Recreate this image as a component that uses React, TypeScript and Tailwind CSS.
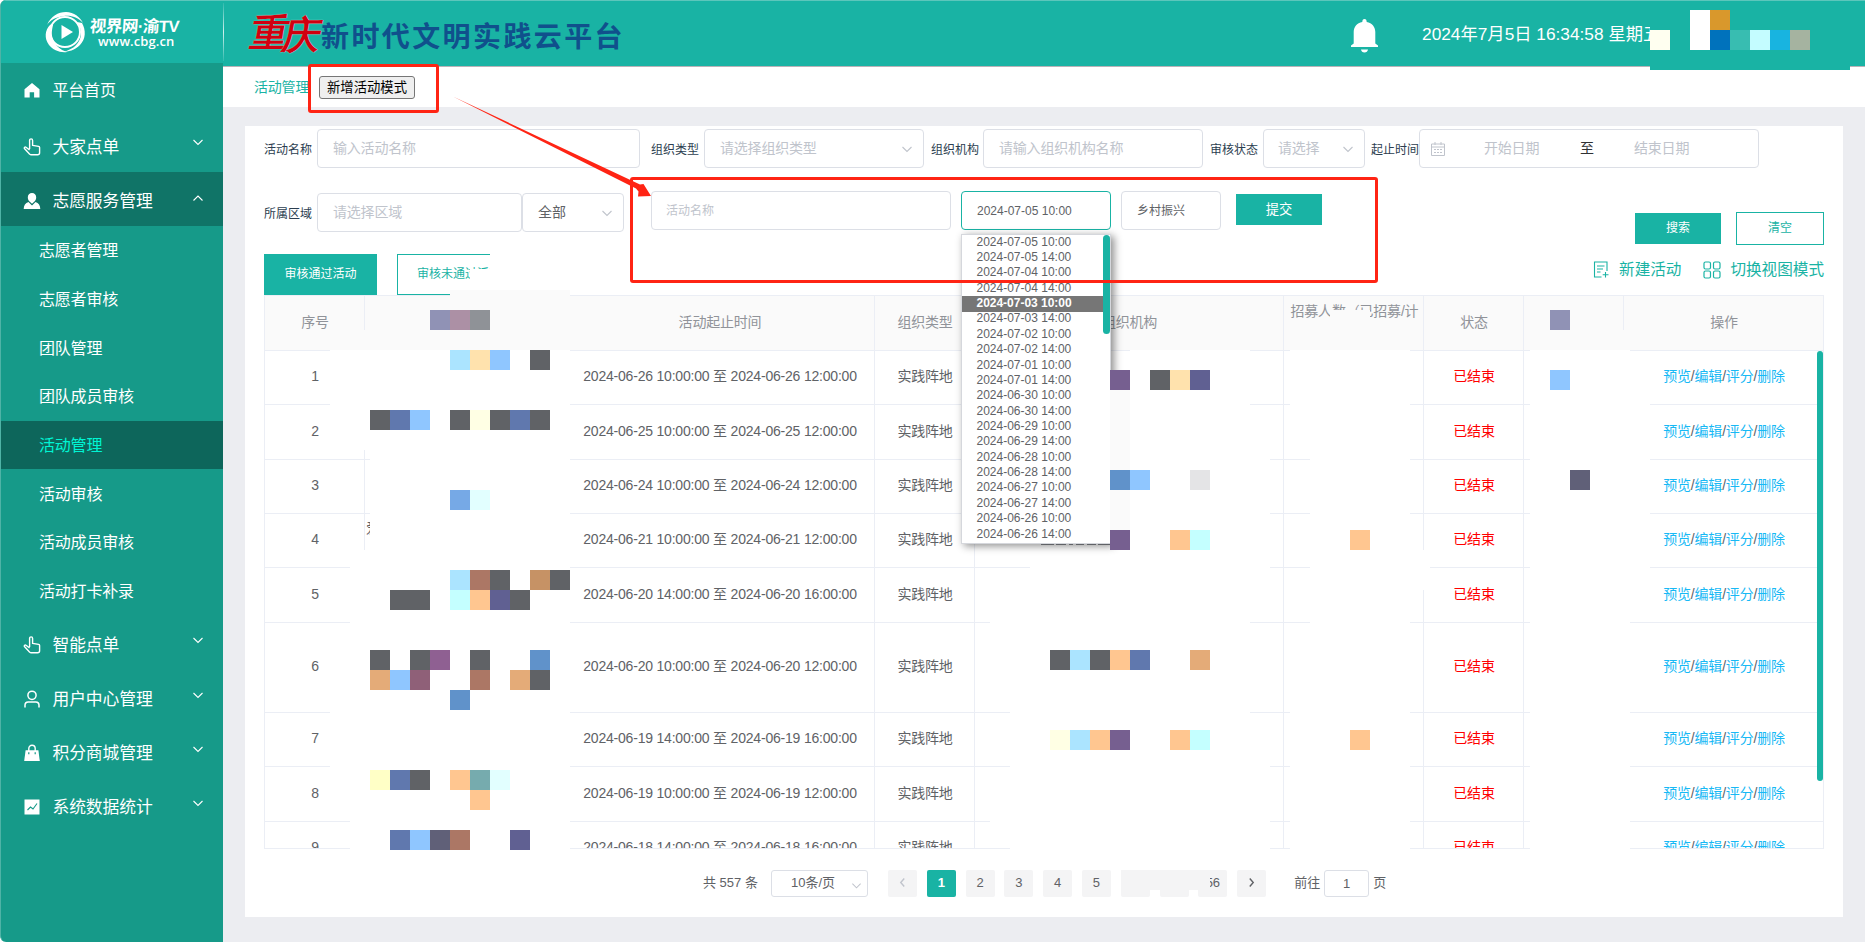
import React from "react";

const LINE = "border-[#ebeef5]";

const rows = [
  { n: 1, time: "2024-06-26 10:00:00 至 2024-06-26 12:00:00", h: 54 },
  { n: 2, time: "2024-06-25 10:00:00 至 2024-06-25 12:00:00", h: 55 },
  { n: 3, time: "2024-06-24 10:00:00 至 2024-06-24 12:00:00", h: 54 },
  { n: 4, time: "2024-06-21 10:00:00 至 2024-06-21 12:00:00", h: 54 },
  { n: 5, time: "2024-06-20 14:00:00 至 2024-06-20 16:00:00", h: 55 },
  { n: 6, time: "2024-06-20 10:00:00 至 2024-06-20 12:00:00", h: 90 },
  { n: 7, time: "2024-06-19 14:00:00 至 2024-06-19 16:00:00", h: 54 },
  { n: 8, time: "2024-06-19 10:00:00 至 2024-06-19 12:00:00", h: 55 },
  { n: 9, time: "2024-06-18 14:00:00 至 2024-06-18 16:00:00", h: 54 },
];

const slots = [
  "2024-07-05 10:00", "2024-07-05 14:00", "2024-07-04 10:00", "2024-07-04 14:00",
  "2024-07-03 10:00", "2024-07-03 14:00", "2024-07-02 10:00", "2024-07-02 14:00",
  "2024-07-01 10:00", "2024-07-01 14:00", "2024-06-30 10:00", "2024-06-30 14:00",
  "2024-06-29 10:00", "2024-06-29 14:00", "2024-06-28 10:00", "2024-06-28 14:00",
  "2024-06-27 10:00", "2024-06-27 14:00", "2024-06-26 10:00", "2024-06-26 14:00",
];

type Patch = [number, number, number, number, string];

const W = "#ffffff";
const G = "#fafafa";
const D = "#606266";

// Blank areas of the redaction layer: x, y, width, height, colour.
const patches: Patch[] = [
  [470, 269, 20, 21, W], [490, 250, 80, 45, W], [450, 290, 120, 20, G], [350, 330, 220, 20, G], [550, 300, 20, 40, G],
  [330, 350, 240, 100, W], [370, 450, 200, 100, W], [350, 550, 220, 150, W], [330, 700, 240, 110, W], [350, 810, 220, 41, W],
  [1130, 350, 120, 60, W], [1130, 410, 140, 190, W], [1110, 600, 140, 120, W], [1110, 720, 160, 130, W],
  [1030, 550, 240, 60, W], [990, 610, 260, 90, W], [1010, 700, 240, 110, W], [990, 810, 280, 20, W], [1010, 830, 260, 20, W],
  [1330, 310, 40, 40, G],
  [1290, 350, 120, 100, W], [1310, 450, 100, 100, W], [1310, 550, 120, 40, W], [1310, 590, 100, 110, W], [1290, 700, 120, 150, W],
  [1530, 330, 100, 20, G], [1530, 350, 100, 40, W], [1530, 390, 120, 220, W], [1530, 610, 100, 240, W],
  [1650, 10, 200, 60, "#19b3a4"],
];

// Areas that also cover the open dropdown's shadow.
const overPatches: Patch[] = [
  [1110, 390, 20, 150, G],
  [1041, 544, 13, 1, D], [1056, 544, 10, 1, D], [1069, 544, 4, 1, D], [1076, 544, 8, 1, D], [1087, 544, 9, 1, D], [1098, 544, 12, 1, D],
];

// Coloured mosaic blocks: x, y, colour.
const cells: [number, number, string][] = [
  [1650, 30, "#fffff0"], [1690, 10, W], [1690, 30, W], [1710, 10, "#d9982c"], [1710, 30, "#0072bc"],
  [1730, 30, "#38bdb1"], [1750, 30, "#c4fcff"], [1770, 30, "#18b4e0"], [1790, 30, "#a5b3a0"],
  [430, 310, "#9092b5"], [450, 310, "#ac90a5"], [470, 310, "#8f9297"],
  [450, 350, "#abe4ff"], [470, 350, "#ffe2ad"], [490, 350, "#8fc6ff"], [530, 350, D],
  [370, 410, D], [390, 410, "#6078ae"], [410, 410, "#8fc6ff"], [450, 410, D], [470, 410, "#ffffe4"],
  [490, 410, D], [510, 410, "#6078ae"], [530, 410, D],
  [450, 490, "#76a9e6"], [470, 490, "#e2ffff"],
  [450, 570, "#abe4ff"], [470, 570, "#ac7765"], [490, 570, D], [530, 570, "#c69265"], [550, 570, D],
  [390, 590, D], [410, 590, D], [450, 590, "#c4ffff"], [470, 590, "#ffc690"], [490, 590, "#606092"], [510, 590, D],
  [370, 650, D], [410, 650, D], [430, 650, "#8f6092"], [470, 650, D], [530, 650, "#6092ca"],
  [370, 670, "#e4ab78"], [390, 670, "#8fc6ff"], [410, 670, "#8f6078"], [470, 670, "#ac7765"], [510, 670, "#e4ab78"], [530, 670, D],
  [450, 690, "#6092ca"],
  [370, 770, "#ffffc6"], [390, 770, "#6078ae"], [410, 770, D], [450, 770, "#ffc690"], [470, 770, "#76abae"], [490, 770, "#e2ffff"],
  [470, 790, "#ffc690"],
  [390, 830, "#6078ae"], [410, 830, "#8fc6ff"], [430, 830, "#606078"], [450, 830, "#ac7765"], [510, 830, "#606092"],
  [1110, 370, "#765f90"], [1150, 370, D], [1170, 370, "#ffe2ad"], [1190, 370, "#606092"],
  [1110, 470, "#6092ca"], [1130, 470, "#8fc6ff"], [1190, 470, "#e4e4e6"],
  [1110, 530, "#765f90"], [1170, 530, "#ffc690"], [1190, 530, "#c4ffff"],
  [1050, 650, D], [1070, 650, "#abe4ff"], [1090, 650, D], [1110, 650, "#ffc690"], [1130, 650, "#6078ae"], [1190, 650, "#e4ab78"],
  [1050, 730, "#ffffe4"], [1070, 730, "#abe4ff"], [1090, 730, "#ffc690"], [1110, 730, "#765f90"], [1170, 730, "#ffc690"], [1190, 730, "#c4ffff"],
  [1350, 530, "#ffc690"], [1350, 730, "#ffc690"],
  [1550, 310, "#9092b5"], [1550, 370, "#8fc6ff"], [1570, 470, "#606078"],
];

function Chevron({ className = "", up = false }: { className?: string; up?: boolean }) {
  return (
    <svg viewBox="0 0 12 12" className={`h-3 w-3 shrink-0 fill-none stroke-current ${className}`} strokeWidth="1.1">
      <path d={up ? "M1.5 8.5 6 4l4.5 4.5" : "M1.5 4 6 8.5 10.5 4"} />
    </svg>
  );
}

const HandIcon = () => (
  <svg viewBox="0 0 18 18" className="h-[18px] w-[18px] fill-none stroke-white" strokeWidth="1.4" strokeLinejoin="round">
    <path d="M6.6 11V2.4a1.5 1.5 0 0 1 3 0v5l6 1a1.2 1.2 0 0 1 1 1.2v5.2a2 2 0 0 1-2 2H8.2c-.7 0-1.2-.3-1.7-.8L1.4 10.600c-.5-.9.6-2 1.600-1.300L6.600 12" />
  </svg>
);
const HomeIcon = () => (
  <svg viewBox="0 0 18 18" className="h-[18px] w-[18px] fill-white">
    <path d="M9 2 1.500 8.200V16.500h5.200V11.300h4.400v5.200h5.400V8.200z" />
  </svg>
);
const PersonIcon = () => (
  <svg viewBox="0 0 18 18" className="h-[18px] w-[18px] fill-white">
    <path d="M9 1c2.500 0 4.200 1.700 4.200 4.200 0 2-.9 3.700-2 4.500L9 11.800 6.800 9.700c-1.100-.8-2-2.500-2-4.500C4.800 2.700 6.500 1 9 1z" />
    <path d="M5.500 10 9 13.600l3.500-3.600c3.200 1 4.700 3.300 4.800 7H.7c.1-3.700 1.600-6 4.800-7z" />
  </svg>
);
const UserIcon = () => (
  <svg viewBox="0 0 18 18" className="h-[18px] w-[18px] fill-none stroke-white" strokeWidth="1.5">
    <circle cx="9" cy="5.300" r="4.100" />
    <path d="M2 17.500v-2.200c0-2 1.200-3.300 3.200-3.300h7.600c2 0 3.200 1.300 3.200 3.300v2.200" />
  </svg>
);
const BagIcon = () => (
  <svg viewBox="0 0 18 18" className="h-[18px] w-[18px]">
    <path d="M5.800 7V4.500a3.200 3.200 0 0 1 6.400 0V7" fill="none" stroke="white" strokeWidth="1.400" />
    <path d="M2.600 6.200h12.800L16.800 17H1.200z" fill="white" />
    <path d="M5.800 8.200v2M12.200 8.200v2" stroke="#169a89" strokeWidth="1.200" />
  </svg>
);
const StatsIcon = () => (
  <svg viewBox="0 0 18 18" className="h-[18px] w-[18px]">
    <path d="M1.500 1.500h15v15h-15z" fill="white" />
    <path d="m4.500 12 3-3 2.500 2 4-5.500" fill="none" stroke="#169a89" strokeWidth="1.100" />
  </svg>
);

function MenuItem({ icon, label }: { icon: React.ReactNode; label: string }) {
  return (
    <div className="flex h-[54.2px] items-center pt-px pr-[19px] pl-[21.500px] text-white">
      {icon}
      <span className="ml-3 flex-1 pt-px text-[16.800px] tracking-[-0.1px]">{label}</span>
      <Chevron className="mb-[9px]" />
    </div>
  );
}

function Sidebar() {
  const subs = ["志愿者管理", "志愿者审核", "团队管理", "团队成员审核", "活动管理", "活动审核", "活动成员审核", "活动打卡补录"];
  return (
    <aside className="flex w-[223px] shrink-0 flex-col overflow-hidden rounded-l-[6px] border-l border-[#4fb3a6] bg-[#169a89]">
      <div className="flex h-[63px] shrink-0 items-center border-t border-[#5cc6bb] bg-[#19b3a4] pl-[43px]">
        <svg viewBox="0 0 42 42" className="h-[42px] w-[42px] shrink-0">
          <path d="M3 14C7 5 14 1 22 1c8 0 14 5 17 11-5-6-13-8-19-7C12 6 6 9 3 14z" fill="white" />
          <path d="M38 12c4 7 4 16-2 22-5 5-12 7-17 7 8-2 14-6 17-13 2-6 1-11-3-17z" fill="white" />
          <path d="M6 14C1 19 0 27 5 34c4 5 11 8 18 7-7-2-12-7-14-13-2-5-1-9 0-14-1-1-2-1-3 0z" fill="white" />
          <circle cx="21" cy="21" r="15" fill="none" stroke="white" strokeWidth="2" />
          <path d="M17.500 14v14l11.500-7z" fill="white" />
        </svg>
        <div className="ml-[4px] text-white">
          <div className="skew-x-[-4deg] pt-px text-[16.500px] leading-[18px] font-bold tracking-[-0.500px] whitespace-nowrap">视界网·渝TV</div>
          <div className="ml-2 pb-px font-[Open_Sans] text-[13px] leading-[12px] font-semibold tracking-[0.1px]">www.cbg.cn</div>
        </div>
      </div>
      <div className="flex h-[54px] shrink-0 items-center pl-[21.500px] text-white">
        <HomeIcon />
        <span className="ml-3 pt-[2px] text-[16px] tracking-[-0.200px]">平台首页</span>
      </div>
      <div className="h-[55px] shrink-0 pt-[2px]">
        <MenuItem icon={<HandIcon />} label="大家点单" />
      </div>
      <div className="flex h-[54px] shrink-0 items-center bg-[#107467] pt-[3px] pr-[19px] pl-[21.500px] text-white">
        <PersonIcon />
        <span className="ml-3 flex-1 pt-[2px] text-[16.800px] tracking-[-0.1px]">志愿服务管理</span>
        <Chevron up className="mb-[6px]" />
      </div>
      <div className="flex shrink-0 flex-col pb-[2px]">
        {subs.map((s, i) => (
          <div
            key={s}
            className={`flex h-[48.660px] items-center pt-[2px] pl-[38px] text-[16px] tracking-[-0.200px] ${i === 4 ? "bg-[#0d665b] text-[#00f5d4]" : "text-white"}`}
          >
            {s}
          </div>
        ))}
      </div>
      <MenuItem icon={<HandIcon />} label="智能点单" />
      <MenuItem icon={<UserIcon />} label="用户中心管理" />
      <MenuItem icon={<BagIcon />} label="积分商城管理" />
      <MenuItem icon={<StatsIcon />} label="系统数据统计" />
    </aside>
  );
}

function Header() {
  return (
    <header className="flex h-[67px] shrink-0 items-center border-t border-b border-t-[#5cc6bb] border-b-[#b9b3b8] bg-[#19b3a4]">
      <div className="mb-[3px] h-[58px] w-px bg-gradient-to-b from-white/10 via-white/80 to-white/10" />
      <div className="ml-[27px] flex w-[70px] -skew-x-[10deg] pt-[3px] font-serif text-[38px] leading-[44px] font-black tracking-[-5px] text-[#d0000f] [text-shadow:0_0_1px_#fff]">
        <span>重</span>
        <span className="mt-[2px]">庆</span>
      </div>
      <div className="mt-[8px] text-[28px] font-bold tracking-[2.400px] whitespace-nowrap text-[#10508c]">新时代文明实践云平台</div>
      <svg viewBox="0 0 27 34" className="mt-[5px] ml-[726px] h-[34px] w-[27px] shrink-0 fill-white">
        <path d="M13.500 0c1.500 0 2.200 1 2.200 3 5.500 1 8.600 5 8.600 10v11.500l2.700 2V28H0v-1.500l2.700-2V13c0-5 3.100-9 8.600-10 0-2 .7-3 2.200-3zM10 30.500h7c-.3 2-1.600 3-3.500 3s-3.200-1-3.500-3z" />
      </svg>
      <div className="ml-[44px] pt-[2px] text-[17.300px] whitespace-nowrap text-white">2024年7月5日 16:34:58 星期五</div>
    </header>
  );
}

const Label = ({ children, className = "" }: { children: React.ReactNode; className?: string }) => (
  <div className={`mt-[2px] shrink-0 text-[12px] whitespace-nowrap text-[#2c3e50] ${className}`}>{children}</div>
);

function Box({ children, className = "" }: { children: React.ReactNode; className?: string }) {
  return (
    <div className={`flex h-[39px] shrink-0 items-center rounded-[4px] border bg-white px-[15px] whitespace-nowrap ${className}`}>
      {children}
    </div>
  );
}

const PH = "border-[#dcdfe6] text-[14px] tracking-[-0.200px] text-[#c0c4cc]";

function Filters() {
  return (
    <>
      <div className="flex items-center">
        <Label className="w-[53px]">活动名称</Label>
        <Box className={`w-[323px] ${PH}`}>输入活动名称</Box>
        <Label className="ml-[11px] w-[53px]">组织类型</Label>
        <Box className={`w-[220px] justify-between !pr-[10px] ${PH}`}>
          请选择组织类型
          <Chevron />
        </Box>
        <Label className="ml-[7px] w-[52px]">组织机构</Label>
        <Box className={`w-[220px] ${PH}`}>请输入组织机构名称</Box>
        <Label className="ml-[7px] w-[53px]">审核状态</Label>
        <Box className={`w-[102px] justify-between !pr-[10px] !pl-[14px] ${PH}`}>
          请选择
          <Chevron />
        </Box>
        <Label className="ml-[6px] w-[48px]">起止时间</Label>
        <Box className={`w-[340px] !pl-[11px] ${PH}`}>
          <svg viewBox="0 0 14 14" className="h-[14px] w-[14px] fill-none stroke-current" strokeWidth="1">
            <path d="M.5 2h13v11.500H.5zM.5 5h13M4 0v3M10 0v3M3 7.500h2M6 7.500h2M9 7.500h2M3 10.500h2M6 10.500h2M9 10.500h2" />
          </svg>
          <span className="ml-[39px] w-[96px]">开始日期</span>
          <span className="w-[54px] text-[#303133]">至</span>
          <span>结束日期</span>
        </Box>
      </div>

      <div className="mt-[23px] flex h-[54px] items-start">
        <Label className="mt-[14px] w-[53px] leading-[18px]">所属区域</Label>
        <Box className={`mt-[2px] w-[205px] ${PH}`}>请选择区域</Box>
        <Box className="mt-[2px] w-[102px] justify-between border-[#dcdfe6] !pr-[10px] text-[14px] text-[#606266]">
          全部
          <Chevron className="text-[#c0c4cc]" />
        </Box>
        <Box className="ml-[27px] w-[300px] border-[#dcdfe6] !px-[14px] text-[12px] text-[#c0c4cc]">活动名称</Box>
        <div className="relative ml-[10px]">
          <Box className="w-[150px] border-[#19b3a4] text-[12px] text-[#606266]">2024-07-05 10:00</Box>
          <div className="absolute top-[43px] left-0 z-20 h-[310px] w-[150px] border border-[#d5d7dc] bg-white text-[12px] text-[#606266] shadow-[3px_2px_8px_rgba(0,0,0,0.45)]">
            {slots.map((s, i) => (
              <div
                key={s}
                className={`mr-[7px] flex h-[15.360px] items-center pb-[2px] pl-[14.500px] ${i === 4 ? "bg-[#767676] font-bold tracking-[-0.020px] text-white" : ""}`}
              >
                {s}
              </div>
            ))}
            <div className="absolute top-0 right-0 h-[99px] w-[7px] rounded-full bg-[#19b3a4]" />
          </div>
        </div>
        <Box className="ml-[10px] w-[100px] border-[#dcdfe6] text-[12px] text-[#606266]">乡村振兴</Box>
        <button className="mt-[3px] ml-[15px] h-[31px] w-[86px] bg-[#19b3a4] text-[13.330px] text-white">提交</button>
        <button className="mt-[22px] ml-[313px] h-[31px] w-[86px] bg-[#19b3a4] pb-px text-[12px] text-white">搜索</button>
        <button className="mt-[21px] ml-[15px] h-[33px] w-[88px] border border-[#19b3a4] pb-px text-[12px] text-[#19b3a4]">清空</button>
      </div>

      <div className="mt-[9px] flex h-[41px]">
        <button className="w-[113px] bg-[#19b3a4] pb-px text-[12px] text-white">审核通过活动</button>
        <button className="ml-[20px] w-[124px] border border-[#19b3a4] pb-px text-[12px] text-[#19b3a4]">审核未通过活动</button>
        <div className="mt-[3px] ml-auto flex h-[26px] items-center text-[15.600px] whitespace-nowrap text-[#19b3a4]">
          <svg viewBox="0 0 16 17" className="mb-px h-[17px] w-[16px] fill-none stroke-current" strokeWidth="1.100">
            <path d="M8.500 16H1.500V1h12.500v9M4 5h7.500M4 8h6M4 11h3.500M12.500 11v5.500M9.700 13.700h5.800" />
          </svg>
          <span className="ml-[10px]">新建活动</span>
          <svg viewBox="0 0 18 18" className="mb-px ml-[22px] h-[18px] w-[18px] fill-none stroke-current" strokeWidth="1.200">
            <rect x="1" y="1" width="6.500" height="7" rx="1.500" />
            <rect x="10.500" y="1" width="6.500" height="7" rx="1.500" />
            <rect x="1" y="10" width="6.500" height="7" rx="1.500" />
            <rect x="10.500" y="10" width="6.500" height="7" rx="1.500" />
          </svg>
          <span className="ml-[9px]">切换视图模式</span>
        </div>
      </div>
    </>
  );
}

const COLS = "grid grid-cols-[100px_200px_310px_100px_309px_140px_100px_100px_200px]";

function Cell({ children, className = "" }: { children?: React.ReactNode; className?: string }) {
  return (
    <div className={`flex items-center justify-center overflow-hidden border-r border-b pb-[2px] pl-px whitespace-nowrap ${LINE} ${className}`}>
      {children}
    </div>
  );
}

function Table() {
  return (
    <div className={`relative h-[554px] w-[1560px] overflow-hidden border text-[14px] tracking-[-0.200px] ${LINE}`}>
      <div className={`${COLS} h-[55px] bg-[#fafafa] text-[#909399]`}>
        <Cell>序号</Cell>
        <Cell />
        <Cell>活动起止时间</Cell>
        <Cell>组织类型</Cell>
        <Cell>组织机构</Cell>
        <Cell className="!items-start !justify-start pt-[5px] !pl-[6.500px]">招募人数（已招募/计</Cell>
        <Cell>状态</Cell>
        <Cell />
        <Cell>操作</Cell>
      </div>
      {rows.map((r) => (
        <div key={r.n} className={`${COLS} text-[#606266]`} style={{ height: r.h }}>
          <Cell>{r.n}</Cell>
          <Cell className="!justify-start">{r.n === 4 && <span className="mb-[22px]">爱</span>}</Cell>
          <Cell>{r.time}</Cell>
          <Cell>实践阵地</Cell>
          <Cell />
          <Cell />
          <Cell className="text-[#f00]">已结束</Cell>
          <Cell />
          <Cell className="text-[#17b9f5]">
            预览<span className="text-[#606266]">/</span>编辑<span className="text-[#606266]">/</span>评分
            <span className="text-[#606266]">/</span>删除
          </Cell>
        </div>
      ))}
      <div className="absolute top-[55px] right-0 h-[430px] w-[6px] rounded-full bg-[#19b3a4]" />
    </div>
  );
}

function Pagination() {
  const btn = "flex h-[27px] w-[29px] items-center justify-center rounded-[2px] bg-[#f4f4f5] pb-[2px]";
  return (
    <div className="mt-[21px] flex h-[27px] items-center pl-[439px] text-[13px] whitespace-nowrap text-[#606266]">
      <span className="w-[68px] pb-[2px]">共 557 条</span>
      <div className="flex h-[27px] w-[97px] items-center rounded-[3px] border border-[#dcdfe6] pr-[5px] pl-[19px]">
        <span className="flex-1 pb-px">10条/页</span>
        <Chevron className="mt-1 h-[11px] w-[11px] text-[#c0c4cc]" />
      </div>
      <div className="ml-[20px] flex gap-[9.800px]">
        <div className={btn}>
          <svg viewBox="0 0 8 12" className="h-[11px] w-[7px] fill-none stroke-[#c0c4cc]" strokeWidth="1.600"><path d="M6 1.500 2 6l4 4.500" /></svg>
        </div>
        <div className="flex h-[27px] w-[29px] items-center justify-center rounded-[2px] bg-[#19b3a4] pb-[2px] font-bold text-white">1</div>
        {[2, 3, 4, 5].map((n) => (
          <div key={n} className={btn}>{n}</div>
        ))}
        <div className="relative flex gap-[9.800px]">
          <div className={btn} />
          <div className={btn} />
          <div className={btn}>56</div>
          <div className="absolute top-0 left-0 h-[20px] w-[89px] bg-[#f4f4f5]" />
        </div>
        <div className={btn}>
          <svg viewBox="0 0 8 12" className="h-[11px] w-[7px] fill-none stroke-[#606266]" strokeWidth="1.600"><path d="m2 1.500 4 4.500-4 4.500" /></svg>
        </div>
      </div>
      <span className="ml-[28px] w-[30px] pb-px">前往</span>
      <div className="flex h-[27px] w-[45px] items-center justify-center rounded-[3px] border border-[#dcdfe6]">1</div>
      <span className="ml-[4px] pb-px">页</span>
    </div>
  );
}

function Redaction() {
  return (
    <>
      {patches.map(([x, y, w, h, c], i) => (
        <div key={i} className="pointer-events-none absolute z-10" style={{ left: x, top: y, width: w, height: h, background: c }} />
      ))}
      {overPatches.map(([x, y, w, h, c], i) => (
        <div key={i} className="pointer-events-none absolute z-30" style={{ left: x, top: y, width: w, height: h, background: c }} />
      ))}
      {cells.map(([x, y, c], i) => (
        <div key={i} className="pointer-events-none absolute z-30 h-5 w-5" style={{ left: x, top: y, background: c }} />
      ))}
    </>
  );
}

function Annotations() {
  return (
    <>
      <div className="absolute top-[64px] left-[308px] z-40 h-[49px] w-[131px] rounded-[3px] border-[3px] border-[#ff2414]" />
      <div className="absolute top-[177px] left-[630px] z-40 h-[106px] w-[748px] rounded-[3px] border-[3px] border-[#ff2414]" />
      <svg viewBox="0 0 204 106" className="absolute top-[94px] left-[450px] z-40 h-[106px] w-[204px] fill-[#ff2414]">
        <path d="M3 2.500 190 90.500 193.500 90 201 102 188 102.500 188.500 97.500 186 94.500z" />
      </svg>
    </>
  );
}

export default function App() {
  return (
    <div className="relative flex h-[942px] w-[1872px] overflow-hidden bg-white pr-[7px] font-['Liberation_Sans','Noto_Sans_CJK_SC',sans-serif]">
      <Sidebar />
      <div className="flex min-w-0 flex-1 flex-col bg-[#ecedf1]">
        <Header />
        <div className="flex h-[40px] shrink-0 items-center bg-white pl-[31px] text-[14px] tracking-[-0.200px] text-[#19b3a4]">
          <span className="w-[65px]">活动管理</span>
          <button className="h-[23px] w-[96px] rounded-[3px] border border-[#767676] bg-[#efefef] pt-px text-[13.330px] leading-[20px] tracking-normal text-black">
            新增活动模式
          </button>
        </div>
        <main className="mt-[19px] ml-[22px] h-[791px] w-[1598px] bg-white pt-[3px] pr-[19px] pl-[19px]">
          <Filters />
          <Table />
          <Pagination />
        </main>
      </div>
      <Redaction />
      <Annotations />
    </div>
  );
}
